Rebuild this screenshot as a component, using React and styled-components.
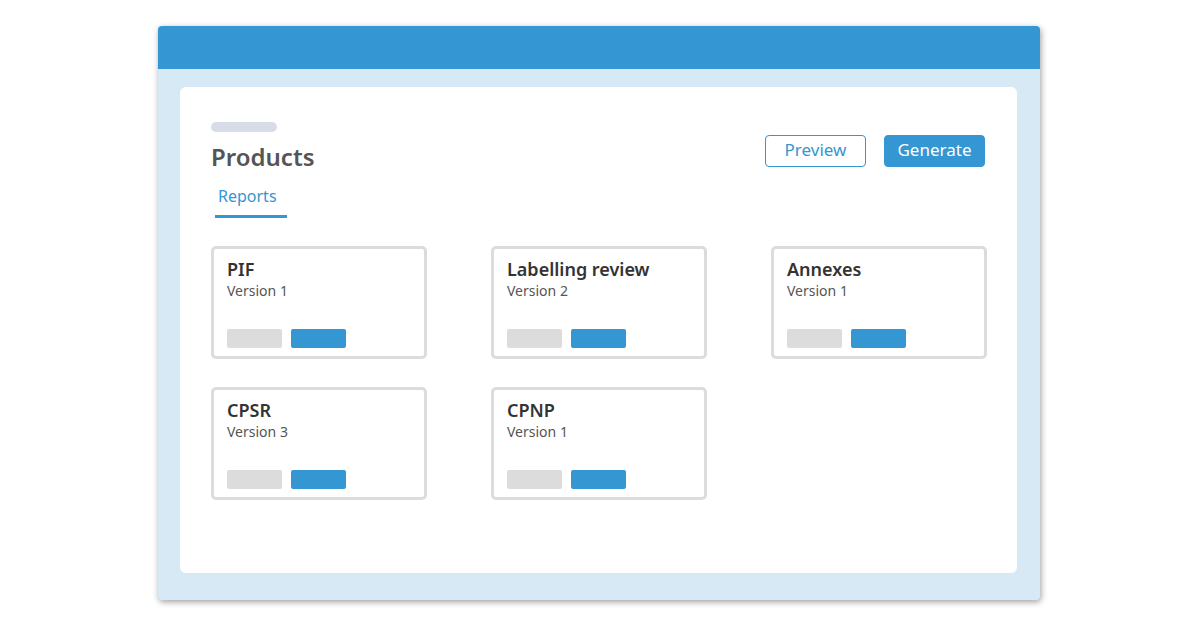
import React from "react";
import styled, { createGlobalStyle } from "styled-components";

const Global = createGlobalStyle`
  html, body { margin: 0; padding: 0; background: #ffffff; }
  body { font-family: "Noto Sans", "Open Sans", sans-serif; }
  * { box-sizing: border-box; }
`;

const BLUE = "#3496d2";

const Page = styled.div`
  width: 1200px;
  height: 630px;
  padding: 26px 0 0 158px;
`;

const Window = styled.div`
  width: 882px;
  height: 574px;
  background: #d6e9f4;
  border-radius: 4px;
  box-shadow: 1px 2px 6px rgba(0, 0, 0, 0.38);
  display: flex;
  flex-direction: column;
  overflow: hidden;
`;

const TopBar = styled.div`
  height: 43px;
  background: ${BLUE};
  flex: none;
`;

const Body = styled.div`
  flex: 1;
  padding: 18px 23px 27px 22px;
  display: flex;
`;

const Panel = styled.div`
  flex: 1;
  min-width: 0;
  background: #ffffff;
  border-radius: 6px;
  padding: 35px 30px 35px 31px;
  display: flex;
  flex-direction: column;
`;

const Header = styled.div`
  display: flex;
  justify-content: space-between;
  align-items: flex-start;
  padding-right: 2px;
`;

const TitleCol = styled.div`
  display: flex;
  flex-direction: column;
`;

const Placeholder = styled.div`
  width: 66px;
  height: 10px;
  border-radius: 5px;
  background: #d7dde6;
`;

const Title = styled.h1`
  margin: 8px 0 0 0;
  font-size: 24px;
  line-height: 34px;
  font-weight: 600;
  color: #555555;
`;

const Tab = styled.div`
  margin: 11px 0 0 4px;
  width: 72px;
  padding: 0 0 8px 3px;
  font-size: 16px;
  line-height: 22px;
  color: ${BLUE};
  border-bottom: 3px solid ${BLUE};
`;

const Actions = styled.div`
  display: flex;
  gap: 18px;
  margin-top: 13px;
`;

const Button = styled.button`
  width: 101px;
  height: 32px;
  border-radius: 4px;
  font-family: inherit;
  font-size: 17px;
  line-height: 22px;
  padding: 0 0 3px 0;
  border: 1px solid ${BLUE};
  background: ${(p) => (p.$primary ? BLUE : "#ffffff")};
  color: ${(p) => (p.$primary ? "#ffffff" : BLUE)};
`;

const Grid = styled.div`
  margin-top: 28px;
  display: grid;
  grid-template-columns: repeat(3, 1fr);
  column-gap: 64px;
  row-gap: 28px;
`;

const Card = styled.div`
  height: 113px;
  border: 3px solid #dcdcdc;
  border-radius: 5px;
  padding: 8px 13px 8px 13px;
  display: flex;
  flex-direction: column;
`;

const CardTitle = styled.div`
  font-size: 18px;
  line-height: 24px;
  font-weight: 600;
  color: #333333;
`;

const Version = styled.div`
  font-size: 14px;
  line-height: 20px;
  color: #555555;
`;

const Bars = styled.div`
  margin-top: auto;
  display: flex;
  gap: 9px;
`;

const Bar = styled.div`
  width: 55px;
  height: 19px;
  border-radius: 2px;
  background: ${(p) => (p.$blue ? BLUE : "#dcdcdc")};
`;

const reports = [
  { name: "PIF", version: 1 },
  { name: "Labelling review", version: 2 },
  { name: "Annexes", version: 1 },
  { name: "CPSR", version: 3 },
  { name: "CPNP", version: 1 },
];

export default function App() {
  return (
    <>
      <Global />
      <Page>
        <Window>
          <TopBar />
          <Body>
            <Panel>
              <Header>
                <TitleCol>
                  <Placeholder />
                  <Title>Products</Title>
                  <Tab>Reports</Tab>
                </TitleCol>
                <Actions>
                  <Button>Preview</Button>
                  <Button $primary>Generate</Button>
                </Actions>
              </Header>
              <Grid>
                {reports.map((r) => (
                  <Card key={r.name}>
                    <CardTitle>{r.name}</CardTitle>
                    <Version>Version {r.version}</Version>
                    <Bars>
                      <Bar />
                      <Bar $blue />
                    </Bars>
                  </Card>
                ))}
              </Grid>
            </Panel>
          </Body>
        </Window>
      </Page>
    </>
  );
}
